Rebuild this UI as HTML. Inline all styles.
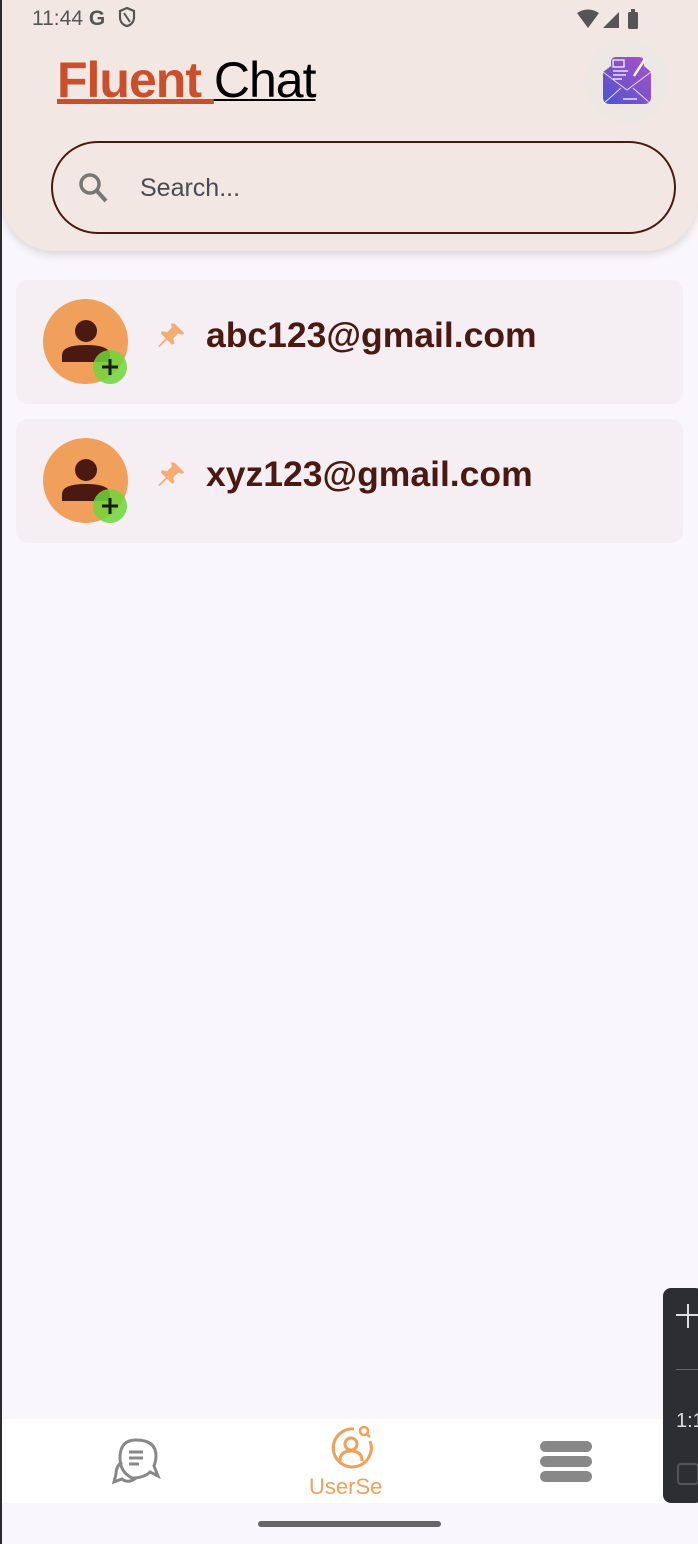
<!DOCTYPE html>
<html><head><meta charset="utf-8"><style>
*{margin:0;padding:0;box-sizing:border-box}
body{width:698px;height:1544px;background:#f9f6fc;font-family:"Liberation Sans",Roboto,sans-serif;position:relative;overflow:hidden}
.lb{position:absolute;left:0;top:0;width:2px;height:1544px;background:#2c2c30}
.hdr{position:absolute;left:2px;top:0;width:696px;height:251px;background:#f2e7e2;border-radius:0 0 52px 52px;box-shadow:0 4px 8px rgba(0,0,0,.12)}
.st{position:absolute;left:30px;top:6px;font-size:21px;color:#555}
.title{position:absolute;left:55px;top:50px;font-size:50px;line-height:60px;text-decoration:underline;text-decoration-thickness:2px;text-underline-offset:2px;letter-spacing:-1px}
.title b{color:#c9502a;text-decoration:underline;text-decoration-color:#c9502a}
.logo{position:absolute;left:583px;top:39px;width:84px;height:84px;border-radius:50%;background:#ede8e4}
.search{position:absolute;left:49px;top:141px;width:625px;height:93px;border:2px solid #4a1a10;border-radius:47px}
.search span{position:absolute;left:87px;top:31px;font-size:25px;color:#4a4a55}
.card{position:absolute;left:16px;width:667px;height:124px;background:#f5eff4;border-radius:12px}
.av{position:absolute;left:27px;top:19px;width:85px;height:85px;border-radius:50%;background:#f0a05a}
.email{position:absolute;left:190px;top:35px;font-size:35.5px;font-weight:bold;color:#4a1a12}
.nav{position:absolute;left:2px;top:1419px;width:696px;height:84px;background:#fff}
.bar{position:absolute;left:258px;top:1521px;width:183px;height:6px;border-radius:3px;background:#666}
.dp{position:absolute;left:663px;top:1288px;width:40px;height:215px;background:#2d2e32;border-radius:8px}
</style></head><body>
<div class="hdr">
<div class="st">11:44 <b style="color:#555">G</b>
<svg width="20" height="22" viewBox="0 0 20 22" style="vertical-align:-3px;margin-left:6px"><path d="M10 2L3 5v6c0 5 3 8 7 9 4-1 7-4 7-9V5z" fill="none" stroke="#555" stroke-width="2.2"/><path d="M7 7l6 9" stroke="#555" stroke-width="2"/></svg></div>
<svg style="position:absolute;left:573px;top:8px" width="80" height="22"><path d="M2 5 Q13 -2 24 5 L13 20Z" fill="#555"/><path d="M28 20 L44 4 V20Z" fill="#555"/><rect x="53" y="4" width="10" height="17" rx="1.5" fill="#555"/><rect x="56" y="1" width="4" height="4" fill="#555"/></svg>
<div class="title"><b>Fluent </b>Chat</div>
<div class="logo"><svg style="position:absolute;left:14px;top:14px" width="56" height="56" viewBox="0 0 56 56"><defs><linearGradient id="g" x1="0" y1="1" x2="1" y2="0"><stop offset="0" stop-color="#4a55d0"/><stop offset="1" stop-color="#b050c8"/></linearGradient></defs><path d="M12 9 Q12 4 17 4 H40 Q45 4 45 9 V13 L52 19 V44 Q52 51 45 51 H11 Q4 51 4 44 V19 L12 13Z" fill="url(#g)"/><path d="M4 19 L28 37 L52 19 M4 51 L22 35 M52 51 L34 35" stroke="#fff" stroke-width="1" fill="none" opacity=".8"/><rect x="14" y="7" width="11" height="7" fill="none" stroke="#fff" stroke-width="1.2"/><path d="M14 18h15M14 22h13M14 26h9M24 46h14" stroke="#fff" stroke-width="1.2"/><path d="M46 6 L35 23" stroke="#fff" stroke-width="2.5"/></svg></div>
<div class="search"><svg style="position:absolute;left:24px;top:28px" width="32" height="34"><circle cx="13" cy="13" r="9" fill="none" stroke="#777" stroke-width="3.5"/><path d="M20 20 L29 30" stroke="#777" stroke-width="4"/></svg><span>Search...</span></div>
</div>
<div class="card" style="top:280px"><div class="av"></div>
<svg style="position:absolute;left:27px;top:19px" width="100" height="90"><circle cx="43" cy="32" r="11" fill="#4a1a12"/><path d="M19 63 V56 Q19 46 43 46 Q67 46 67 56 V63Z" fill="#4a1a12"/><circle cx="67" cy="68" r="17" fill="#6ed63a" opacity=".85"/><path d="M67 60V76M59 68H75" stroke="#1a1a1a" stroke-width="3"/></svg>
<svg style="position:absolute;left:141px;top:41px" width="30" height="30" viewBox="0 0 24 24"><path d="M14 2l8 8-2 1-3-1-4 4 1 4-2 1-4-4-6 6-1-1 6-6-4-4 1-2 4 1 4-4-1-3z" fill="#f2ad74"/></svg>
<div class="email">abc123@gmail.com</div></div>
<div class="card" style="top:419px"><div class="av"></div>
<svg style="position:absolute;left:27px;top:19px" width="100" height="90"><circle cx="43" cy="32" r="11" fill="#4a1a12"/><path d="M19 63 V56 Q19 46 43 46 Q67 46 67 56 V63Z" fill="#4a1a12"/><circle cx="67" cy="68" r="17" fill="#6ed63a" opacity=".85"/><path d="M67 60V76M59 68H75" stroke="#1a1a1a" stroke-width="3"/></svg>
<svg style="position:absolute;left:141px;top:41px" width="30" height="30" viewBox="0 0 24 24"><path d="M14 2l8 8-2 1-3-1-4 4 1 4-2 1-4-4-6 6-1-1 6-6-4-4 1-2 4 1 4-4-1-3z" fill="#f2ad74"/></svg>
<div class="email">xyz123@gmail.com</div></div>
<div class="nav">
<svg style="position:absolute;left:104px;top:15px" width="60" height="60"><path d="M30 6 Q14 6 14 24 Q14 38 26 44 Q38 44 44 38 L52 42 L48 32 Q50 26 50 22 Q50 6 30 6Z" fill="none" stroke="#888" stroke-width="3"/><path d="M16 28 Q10 32 10 40 L8 48 L16 45 Q22 50 30 44" fill="none" stroke="#888" stroke-width="3"/><path d="M23 18h14M23 24h14M23 30h10" stroke="#888" stroke-width="3"/></svg>
<svg style="position:absolute;left:322px;top:2px" width="56" height="56"><path d="M30 8 A19 19 0 1 0 46 20" fill="none" stroke="#f0a05a" stroke-width="3"/><circle cx="40" cy="10" r="4" fill="none" stroke="#f0a05a" stroke-width="2.5"/><path d="M43 13l3 3" stroke="#f0a05a" stroke-width="2.5"/><circle cx="27" cy="23" r="6" fill="none" stroke="#f0a05a" stroke-width="3"/><path d="M16 40 Q16 30 27 30 Q38 30 38 40" fill="none" stroke="#f0a05a" stroke-width="3"/></svg>
<div style="position:absolute;left:307px;top:55px;font-size:22px;color:#f0a05a">UserSe</div>
<div style="position:absolute;left:538px;top:22px;width:52px"><div style="height:11px;background:#888;border-radius:6px;margin-bottom:4px"></div><div style="height:11px;background:#888;border-radius:6px;margin-bottom:4px"></div><div style="height:11px;background:#888;border-radius:6px"></div></div>
</div>
<div class="bar"></div>
<div class="dp"><div style="position:absolute;left:13px;top:26px;width:25px;height:2px;background:#ddd"></div><div style="position:absolute;left:24px;top:16px;width:2px;height:24px;background:#ddd"></div><div style="position:absolute;left:13px;top:81px;width:25px;height:1px;background:#666"></div><div style="position:absolute;left:13px;top:122px;color:#ddd;font-size:20px">1:1</div><div style="position:absolute;left:14px;top:175px;width:22px;height:22px;border:2px solid #555;border-radius:4px"></div></div>
<div class="lb"></div>
</body></html>
